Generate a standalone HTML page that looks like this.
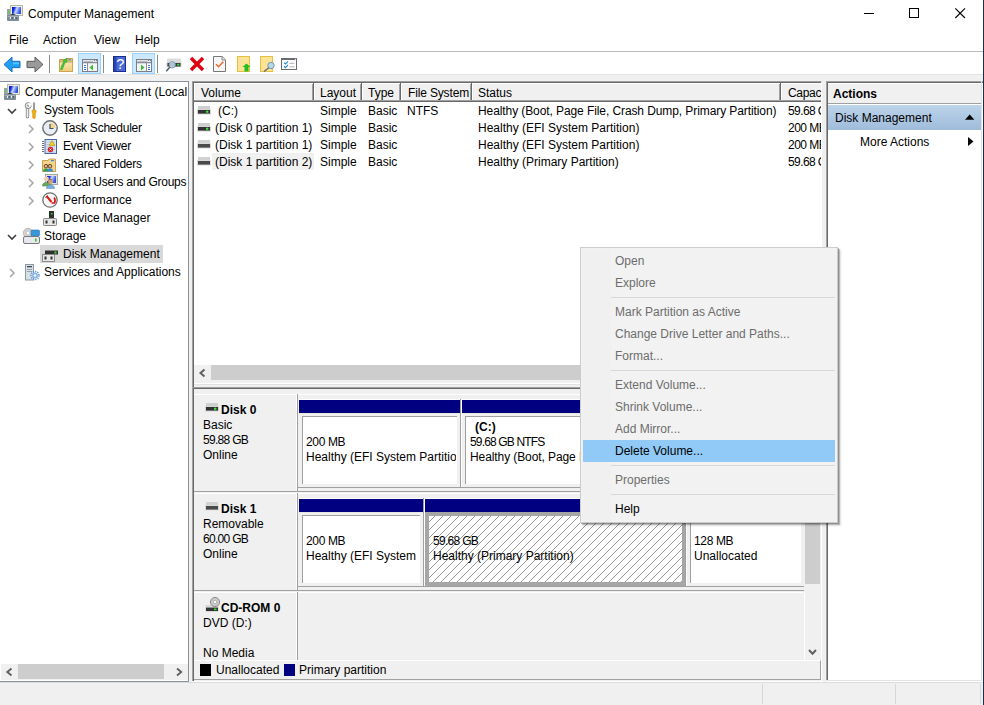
<!DOCTYPE html>
<html><head><meta charset="utf-8">
<style>
*{margin:0;padding:0;box-sizing:border-box}
html,body{width:984px;height:705px;overflow:hidden;background:#f0f0f0;font-family:"Liberation Sans",sans-serif;font-size:12px;color:#000}
.a{position:absolute}
.t{position:absolute;white-space:nowrap;line-height:14px;font-size:12px}
.b{font-weight:bold}
.g{color:#6d6d6d}
.clip{overflow:hidden}
svg{position:absolute;overflow:visible}
</style></head><body>
<!-- ===== title / menu / toolbar ===== -->
<div class="a" style="left:0;top:0;width:983px;height:74px;background:#fff"></div>
<div class="a" style="left:0;top:51px;width:983px;height:1px;background:#bababa"></div>
<div class="a" style="left:0;top:74px;width:983px;height:7px;background:#f0f0f0;border-top:1px solid #e2e2e2"></div>
<div class="a" style="left:983px;top:0;width:1px;height:705px;background:#1c2d4e"></div>
<div class="t" style="left:28px;top:7px">Computer Management</div>
<div class="t" style="left:9px;top:33px">File</div>
<div class="t" style="left:43px;top:33px">Action</div>
<div class="t" style="left:94px;top:33px">View</div>
<div class="t" style="left:135px;top:33px">Help</div>
<!-- window controls -->
<div class="a" style="left:864px;top:13px;width:10px;height:1px;background:#000"></div>
<div class="a" style="left:909px;top:8px;width:10px;height:10px;border:1px solid #000"></div>
<svg style="left:955px;top:8px" width="11" height="11"><path d="M0.3 0.3L10 10M10 0.3L0.3 10" stroke="#000" stroke-width="1.1"/></svg>

<!-- ===== left panel ===== -->
<div class="a" style="left:0;top:81px;width:189px;height:601px;background:#fff;border-top:1px solid #8c9299;border-right:1px solid #8c9299;border-bottom:1px solid #8c9299"></div>
<div class="a" style="left:40px;top:245px;width:123px;height:18px;background:#d9d9d9"></div>
<div class="a clip" style="left:0;top:82px;width:188px;height:582px">
<div class="t" style="left:25px;top:3px">Computer Management (Local</div>
<div class="t" style="left:44px;top:21px;letter-spacing:-0.1px">System Tools</div>
<div class="t" style="left:63px;top:39px;letter-spacing:-0.23px">Task Scheduler</div>
<div class="t" style="left:63px;top:57px;letter-spacing:-0.2px">Event Viewer</div>
<div class="t" style="left:63px;top:75px;letter-spacing:-0.23px">Shared Folders</div>
<div class="t" style="left:63px;top:93px;letter-spacing:-0.28px">Local Users and Groups</div>
<div class="t" style="left:63px;top:111px">Performance</div>
<div class="t" style="left:63px;top:129px">Device Manager</div>
<div class="t" style="left:44px;top:147px">Storage</div>
<div class="t" style="left:63px;top:165px">Disk Management</div>
<div class="t" style="left:44px;top:183px">Services and Applications</div>
</div>
<!-- left h-scrollbar -->
<div class="a" style="left:1px;top:664px;width:187px;height:16px;background:#f0f0f0"></div>
<div class="a" style="left:18px;top:664px;width:146px;height:15px;background:#cdcdcd"></div>

<!-- ===== middle panel ===== -->
<div class="a" style="left:192px;top:81px;width:630px;height:304px;border-top:1px solid #a0a0a0;border-left:1px solid #a0a0a0;border-right:1px solid #fff"></div>
<div class="a" style="left:193px;top:82px;width:628px;height:302px;border-top:1px solid #696969;border-left:1px solid #696969;background:#fff"></div>
<div class="a" style="left:192px;top:383px;width:630px;height:1px;background:#fff"></div>
<div class="a" style="left:192px;top:384px;width:630px;height:1px;background:#e3e3e3"></div>

<!-- list header -->
<div class="a" style="left:194px;top:83px;width:627px;height:19px;background:#f0f0f0"></div>
<div class="a" style="left:194px;top:83px;width:120px;height:1px;background:#fff"></div>
<div class="a" style="left:194px;top:83px;width:1px;height:18px;background:#fff"></div>
<div class="a" style="left:312px;top:84px;width:1px;height:17px;background:#a0a0a0"></div>
<div class="a" style="left:313px;top:83px;width:1px;height:19px;background:#696969"></div>
<div class="a" style="left:314px;top:83px;width:48px;height:1px;background:#fff"></div>
<div class="a" style="left:314px;top:83px;width:1px;height:18px;background:#fff"></div>
<div class="a" style="left:360px;top:84px;width:1px;height:17px;background:#a0a0a0"></div>
<div class="a" style="left:361px;top:83px;width:1px;height:19px;background:#696969"></div>
<div class="a" style="left:362px;top:83px;width:39px;height:1px;background:#fff"></div>
<div class="a" style="left:362px;top:83px;width:1px;height:18px;background:#fff"></div>
<div class="a" style="left:399px;top:84px;width:1px;height:17px;background:#a0a0a0"></div>
<div class="a" style="left:400px;top:83px;width:1px;height:19px;background:#696969"></div>
<div class="a" style="left:401px;top:83px;width:71px;height:1px;background:#fff"></div>
<div class="a" style="left:401px;top:83px;width:1px;height:18px;background:#fff"></div>
<div class="a" style="left:470px;top:84px;width:1px;height:17px;background:#a0a0a0"></div>
<div class="a" style="left:471px;top:83px;width:1px;height:19px;background:#696969"></div>
<div class="a" style="left:472px;top:83px;width:309px;height:1px;background:#fff"></div>
<div class="a" style="left:472px;top:83px;width:1px;height:18px;background:#fff"></div>
<div class="a" style="left:779px;top:84px;width:1px;height:17px;background:#a0a0a0"></div>
<div class="a" style="left:780px;top:83px;width:1px;height:19px;background:#696969"></div>
<div class="a" style="left:781px;top:83px;width:40px;height:1px;background:#fff"></div>
<div class="a" style="left:781px;top:83px;width:1px;height:18px;background:#fff"></div>
<div class="a" style="left:194px;top:100px;width:627px;height:1px;background:#a0a0a0"></div>
<div class="a" style="left:194px;top:101px;width:627px;height:1px;background:#696969"></div>

<div class="t" style="left:201px;top:86px">Volume</div>
<div class="t" style="left:320px;top:86px">Layout</div>
<div class="t" style="left:368px;top:86px">Type</div>
<div class="t" style="left:408px;top:86px;letter-spacing:-0.15px">File System</div>
<div class="t" style="left:478px;top:86px">Status</div>
<div class="a clip" style="left:783px;top:83px;width:38px;height:18px"><div class="t" style="left:5px;top:3px;letter-spacing:-0.3px">Capacity</div></div>
<!-- rows -->
<div class="a" style="left:212px;top:153px;width:102px;height:17px;background:#f0f0f0"></div>
<div class="t" style="left:218px;top:104px">(C:)</div>
<div class="t" style="left:215px;top:121px">(Disk 0 partition 1)</div>
<div class="t" style="left:215px;top:138px">(Disk 1 partition 1)</div>
<div class="t" style="left:215px;top:155px">(Disk 1 partition 2)</div>
<div class="t" style="left:320px;top:104px">Simple</div>
<div class="t" style="left:320px;top:121px">Simple</div>
<div class="t" style="left:320px;top:138px">Simple</div>
<div class="t" style="left:320px;top:155px">Simple</div>
<div class="t" style="left:368px;top:104px">Basic</div>
<div class="t" style="left:368px;top:121px">Basic</div>
<div class="t" style="left:368px;top:138px">Basic</div>
<div class="t" style="left:368px;top:155px">Basic</div>
<div class="t" style="left:407px;top:104px">NTFS</div>
<div class="t" style="left:478px;top:104px;letter-spacing:-0.09px">Healthy (Boot, Page File, Crash Dump, Primary Partition)</div>
<div class="t" style="left:478px;top:121px">Healthy (EFI System Partition)</div>
<div class="t" style="left:478px;top:138px">Healthy (EFI System Partition)</div>
<div class="t" style="left:478px;top:155px">Healthy (Primary Partition)</div>
<div class="a clip" style="left:783px;top:102px;width:38px;height:70px">
<div class="t" style="left:5px;top:2px;letter-spacing:-0.6px">59.68 GB</div>
<div class="t" style="left:5px;top:19px;letter-spacing:-0.5px">200 MB</div>
<div class="t" style="left:5px;top:36px;letter-spacing:-0.5px">200 MB</div>
<div class="t" style="left:5px;top:53px;letter-spacing:-0.6px">59.68 GB</div>
</div>
<!-- list h-scroll -->
<div class="a" style="left:194px;top:365px;width:627px;height:18px;background:#f0f0f0"></div>
<div class="a" style="left:211px;top:365px;width:580px;height:15px;background:#cdcdcd"></div>
<svg style="left:199px;top:369px" width="7" height="8"><path d="M5.5 0.5L1.5 4L5.5 7.5" stroke="#606060" stroke-width="2" fill="none"/></svg>

<!-- ===== disk graphic ===== -->
<div class="a" style="left:192px;top:81px;width:1px;height:601px;background:#a0a0a0"></div>
<div class="a" style="left:193px;top:82px;width:1px;height:599px;background:#696969"></div>
<div class="a" style="left:192px;top:387px;width:631px;height:1px;background:#a0a0a0"></div>
<div class="a" style="left:192px;top:388px;width:631px;height:1px;background:#696969"></div>
<div class="a" style="left:192px;top:387px;width:1px;height:295px;background:#a0a0a0"></div>
<div class="a" style="left:193px;top:388px;width:1px;height:293px;background:#696969"></div>
<div class="a" style="left:192px;top:681px;width:631px;height:1px;background:#fff"></div>
<div class="a" style="left:821px;top:387px;width:1px;height:295px;background:#fff"></div>
ROWS

<!-- disk rows -->
<div class="a" style="left:194px;top:394px;width:609px;height:1px;background:#fff"></div>
<div class="a" style="left:297px;top:394px;width:1px;height:97px;background:#a0a0a0"></div>
<div class="a" style="left:296px;top:395px;width:1px;height:96px;background:#fff"></div>
<div class="a" style="left:194px;top:491px;width:610px;height:1px;background:#a0a0a0"></div>
<div class="a" style="left:298px;top:487px;width:506px;height:1px;background:#a0a0a0"></div>
<div class="a" style="left:194px;top:493px;width:609px;height:1px;background:#fff"></div>
<div class="a" style="left:297px;top:493px;width:1px;height:97px;background:#a0a0a0"></div>
<div class="a" style="left:296px;top:494px;width:1px;height:96px;background:#fff"></div>
<div class="a" style="left:194px;top:590px;width:610px;height:1px;background:#a0a0a0"></div>
<div class="a" style="left:298px;top:586px;width:506px;height:1px;background:#a0a0a0"></div>
<div class="a" style="left:194px;top:592px;width:609px;height:1px;background:#fff"></div>
<div class="a" style="left:297px;top:592px;width:1px;height:68px;background:#a0a0a0"></div>
<div class="a" style="left:296px;top:593px;width:1px;height:67px;background:#fff"></div>

<div class="t b" style="left:221px;top:403px">Disk 0</div>
<div class="t" style="left:203px;top:418px">Basic</div>
<div class="t" style="left:203px;top:433px;letter-spacing:-0.7px">59.88 GB</div>
<div class="t" style="left:203px;top:448px">Online</div>
<div class="t b" style="left:221px;top:502px">Disk 1</div>
<div class="t" style="left:203px;top:517px">Removable</div>
<div class="t" style="left:203px;top:532px;letter-spacing:-0.7px">60.00 GB</div>
<div class="t" style="left:203px;top:547px">Online</div>
<div class="t b" style="left:221px;top:601px">CD-ROM 0</div>
<div class="t" style="left:203px;top:616px">DVD (D:)</div>
<div class="t" style="left:203px;top:646px">No Media</div>
<div class="a" style="left:299px;top:399px;width:161px;height:1px;background:#fff"></div>
<div class="a" style="left:299px;top:400px;width:161px;height:13px;background:#000080"></div>
<div class="a" style="left:460px;top:399px;width:1px;height:88px;background:#a0a0a0"></div>
<div class="a" style="left:461px;top:399px;width:1px;height:88px;background:#fff"></div>
<div class="a" style="left:299px;top:413px;width:161px;height:1px;background:#e6e6e0"></div>
<div class="a" style="left:302px;top:416px;width:155px;height:68px;background:#fff;border-top:1px solid #a0a0a0;border-left:1px solid #a0a0a0"></div>
<div class="a clip" style="left:302px;top:416px;width:154px;height:68px">
<div class="t" style="left:4px;top:19px;letter-spacing:-0.35px">200 MB</div>
<div class="t" style="left:4px;top:34px">Healthy (EFI System Partition)</div>
</div>
<div class="a" style="left:462px;top:399px;width:342px;height:1px;background:#fff"></div>
<div class="a" style="left:462px;top:400px;width:342px;height:13px;background:#000080"></div>
<div class="a" style="left:462px;top:413px;width:342px;height:1px;background:#e6e6e0"></div>
<div class="a" style="left:465px;top:416px;width:336px;height:68px;background:#fff;border-top:1px solid #a0a0a0;border-left:1px solid #a0a0a0"></div>
<div class="a clip" style="left:465px;top:416px;width:335px;height:68px">
<div class="t b" style="left:10px;top:4px">(C:)</div>
<div class="t" style="left:5px;top:19px;letter-spacing:-0.85px">59.68 GB NTFS</div>
<div class="t" style="left:5px;top:34px;letter-spacing:-0.09px">Healthy (Boot, Page File, Crash Dump, Primary Partition)</div>
</div>
<div class="a" style="left:299px;top:498px;width:124px;height:1px;background:#fff"></div>
<div class="a" style="left:299px;top:499px;width:124px;height:13px;background:#000080"></div>
<div class="a" style="left:423px;top:498px;width:1px;height:88px;background:#a0a0a0"></div>
<div class="a" style="left:424px;top:498px;width:1px;height:88px;background:#fff"></div>
<div class="a" style="left:299px;top:512px;width:124px;height:1px;background:#e6e6e0"></div>
<div class="a" style="left:302px;top:515px;width:118px;height:68px;background:#fff;border-top:1px solid #a0a0a0;border-left:1px solid #a0a0a0"></div>
<div class="a clip" style="left:302px;top:515px;width:117px;height:68px">
<div class="t" style="left:4px;top:19px;letter-spacing:-0.35px">200 MB</div>
<div class="t" style="left:4px;top:34px">Healthy (EFI System Partition)</div>
</div>
<div class="a" style="left:425px;top:498px;width:260px;height:1px;background:#fff"></div>
<div class="a" style="left:425px;top:499px;width:260px;height:13px;background:#000080"></div>
<div class="a" style="left:685px;top:498px;width:1px;height:88px;background:#a0a0a0"></div>
<div class="a" style="left:686px;top:498px;width:1px;height:88px;background:#fff"></div>
<div class="a" style="left:425px;top:512px;width:260px;height:74px;background:#a6a6a6"></div>
<svg style="left:429px;top:516px" width="253" height="66" shape-rendering="crispEdges"><defs><pattern id="h99" x="6" width="8" height="8" patternUnits="userSpaceOnUse"><rect x="0" y="7" width="1" height="1" fill="#969696"/><rect x="1" y="6" width="1" height="1" fill="#969696"/><rect x="2" y="5" width="1" height="1" fill="#969696"/><rect x="3" y="4" width="1" height="1" fill="#969696"/><rect x="4" y="3" width="1" height="1" fill="#969696"/><rect x="5" y="2" width="1" height="1" fill="#969696"/><rect x="6" y="1" width="1" height="1" fill="#969696"/><rect x="7" y="0" width="1" height="1" fill="#969696"/></pattern></defs><rect width="253" height="66" fill="#fff"/><rect width="253" height="66" fill="url(#h99)"/></svg>
<div class="a clip" style="left:429px;top:516px;width:252px;height:66px">
<div class="t" style="left:4px;top:18px;letter-spacing:-0.7px">59.68 GB</div>
<div class="t" style="left:4px;top:33px">Healthy (Primary Partition)</div>
</div>
<div class="a" style="left:687px;top:498px;width:117px;height:1px;background:#fff"></div>
<div class="a" style="left:687px;top:499px;width:117px;height:13px;background:#000"></div>
<div class="a" style="left:687px;top:512px;width:117px;height:1px;background:#e6e6e0"></div>
<div class="a" style="left:690px;top:515px;width:111px;height:68px;background:#fff;border-top:1px solid #a0a0a0;border-left:1px solid #a0a0a0"></div>
<div class="a clip" style="left:690px;top:515px;width:110px;height:68px">
<div class="t" style="left:4px;top:19px;letter-spacing:-0.35px">128 MB</div>
<div class="t" style="left:4px;top:34px">Unallocated</div>
</div>

<!-- disk v-scroll -->
<div class="a" style="left:804px;top:389px;width:17px;height:271px;background:#f0f0f0"></div>
<div class="a" style="left:805px;top:420px;width:15px;height:164px;background:#cdcdcd"></div>
<svg style="left:808px;top:649px" width="9" height="7"><path d="M1 1L4.5 4.8L8 1" stroke="#606060" stroke-width="2" fill="none"/></svg>
<div class="a" style="left:804px;top:592px;width:1px;height:68px;background:#fff"></div>
<!-- legend -->
<div class="a" style="left:194px;top:660px;width:627px;height:20px;background:#f0f0f0;border-top:1px solid #fff;border-right:1px solid #a0a0a0;border-bottom:1px solid #a0a0a0"></div>
<div class="a" style="left:200px;top:664px;width:11px;height:12px;background:#000"></div>
<div class="t" style="left:216px;top:663px">Unallocated</div>
<div class="a" style="left:284px;top:664px;width:11px;height:12px;background:#000080"></div>
<div class="t" style="left:299px;top:663px">Primary partition</div>

<!-- ===== actions panel ===== -->
<div class="a" style="left:826px;top:81px;width:157px;height:601px;background:#fff"></div>
<div class="a" style="left:826px;top:81px;width:157px;height:1px;background:#a0a0a0"></div>
<div class="a" style="left:826px;top:82px;width:157px;height:1px;background:#696969"></div>
<div class="a" style="left:826px;top:81px;width:1px;height:601px;background:#a0a0a0"></div>
<div class="a" style="left:827px;top:82px;width:1px;height:599px;background:#696969"></div>
<div class="a" style="left:828px;top:83px;width:153px;height:20px;background:#f0f0f0;border-top:1px solid #fff"></div>
<div class="a" style="left:828px;top:103px;width:153px;height:1px;background:#a0a0a0"></div>
<div class="a" style="left:828px;top:104px;width:153px;height:1px;background:#fff"></div>
<div class="a" style="left:828px;top:105px;width:153px;height:25px;background:linear-gradient(#bdd4ea,#9fbcdb)"></div>
<div class="a" style="left:981px;top:81px;width:1px;height:601px;background:#e3e3e3"></div>
<div class="a" style="left:826px;top:681px;width:157px;height:1px;background:#fff"></div>
<div class="a" style="left:826px;top:680px;width:156px;height:1px;background:#e3e3e3"></div>
<div class="t b" style="left:833px;top:87px">Actions</div>
<div class="t" style="left:835px;top:111px">Disk Management</div>
<div class="t" style="left:860px;top:135px">More Actions</div>
<svg style="left:965px;top:114px" width="10" height="6"><path d="M0 5.8L4.7 0.6L9.4 5.8Z" fill="#000"/></svg>
<svg style="left:968px;top:137px" width="6" height="9"><path d="M0 0L5.5 4.5L0 9Z" fill="#000"/></svg>

<!-- status bar -->
<div class="a" style="left:0;top:682px;width:983px;height:1px;background:#dcdcdc"></div>
<div class="a" style="left:762px;top:684px;width:1px;height:20px;background:#d7d7d7"></div>
<div class="a" style="left:895px;top:684px;width:1px;height:20px;background:#d7d7d7"></div>
<div class="a" style="left:980px;top:684px;width:1px;height:20px;background:#d7d7d7"></div>


<!-- ===== icons ===== -->
<svg width="0" height="0" style="left:0;top:0"><defs>
<linearGradient id="scr" x1="0" y1="0" x2="1" y2="0.3"><stop offset="0" stop-color="#0010c0"/><stop offset="0.3" stop-color="#1838d8"/><stop offset="0.55" stop-color="#c8d8ff"/><stop offset="1" stop-color="#3050e0"/></linearGradient>
<g id="comp">
<rect x="3.5" y="0.5" width="12" height="10" fill="#eeeee4" stroke="#b8b8a8"/>
<rect x="5" y="2" width="9" height="7" fill="url(#scr)"/>
<rect x="0" y="4" width="3" height="7" fill="#9aa2a6"/>
<rect x="0.8" y="6.5" width="2" height="1.5" fill="#40e040"/>
<path d="M3 11C4 9 8 9 9 11" stroke="#202020" stroke-width="1.2" fill="none"/>
<rect x="0" y="10" width="12" height="6" rx="0.8" fill="#7e8e98"/>
<rect x="0.5" y="11" width="11" height="1" fill="#a8b4bc"/>
<rect x="3" y="12" width="1.5" height="2" fill="#e8eef2"/><rect x="7" y="12" width="1.5" height="2" fill="#e8eef2"/>
<rect x="4.5" y="12" width="1" height="2" fill="#303840"/><rect x="8.5" y="12" width="1" height="2" fill="#303840"/>
</g>
<g id="drv">
<rect x="1" y="0" width="12" height="3.5" fill="#cfcfcf"/>
<rect x="0" y="3" width="14" height="5.5" rx="0.5" fill="#d6d6d6"/>
<rect x="1" y="4" width="12" height="3.6" fill="#333"/>
</g>
<g id="drvg">
<use href="#drv"/>
<rect x="9" y="5" width="2.4" height="1.6" fill="#30e030"/><rect x="9.7" y="4.3" width="1" height="3" fill="#50f050" opacity="0.7"/>
</g>
<g id="drvn">
<rect x="1" y="0" width="12" height="3.5" fill="#d2d2d2"/>
<rect x="0" y="3" width="14" height="5.5" rx="0.5" fill="#dadada"/>
<rect x="1" y="4" width="12" height="3.6" fill="#4a4a4a"/>
</g>
</defs></svg>

<!-- title icon -->
<svg style="left:7px;top:5px" width="16" height="16"><use href="#comp"/></svg>

<!-- toolbar -->
<svg style="left:3px;top:56px" width="18" height="17"><path d="M1 8.5L9 1V5.3H17V11.6H9V16Z" fill="#22a0f0" stroke="#1a6cc8" stroke-width="1" stroke-linejoin="round"/><rect x="10" y="6.3" width="6" height="2" fill="#58c0ff"/></svg>
<svg style="left:26px;top:56px" width="18" height="17"><path d="M17 8.5L9 1V5.3H1V11.6H9V16Z" fill="#9a9a9a" stroke="#5a5a5a" stroke-width="1" stroke-linejoin="round"/></svg>
<div class="a" style="left:49px;top:55px;width:1px;height:18px;background:#8a8a8a"></div>
<div class="a" style="left:103px;top:55px;width:1px;height:18px;background:#8a8a8a"></div>
<div class="a" style="left:157px;top:55px;width:1px;height:18px;background:#8a8a8a"></div>
<svg style="left:59px;top:57px" width="15" height="16"><defs><linearGradient id="fd" x1="0" y1="0" x2="0" y2="1"><stop offset="0" stop-color="#fbe6b0"/><stop offset="1" stop-color="#f0cc78"/></linearGradient></defs><path d="M0.5 2.5H6L7 1.5H13.5V14.5H0.5Z" fill="#e8c070" stroke="#c8a050"/><rect x="0.5" y="5" width="13" height="9.5" fill="url(#fd)" stroke="#c8a050" stroke-width="0.8"/><rect x="9.5" y="2.2" width="2.5" height="1.3" fill="#4a90e0"/><path d="M1.5 12.5C2.5 9 3.5 6.5 5 4.5L3.8 3.6L8.2 1L7.8 5.6L6.6 4.9C5.3 7 4.3 9.5 3.3 12.8Z" fill="#3cc83c" stroke="#2aa02a" stroke-width="0.5"/></svg>
<div class="a" style="left:78px;top:53px;width:23px;height:21px;background:#cce8ff;border:1px solid #99d1ff"></div>
<svg style="left:82px;top:59px" width="16" height="13" shape-rendering="crispEdges"><rect x="0" y="0" width="16" height="13" fill="#7a7e86"/><rect x="1" y="1" width="14" height="11" fill="#fff"/><rect x="1" y="1" width="14" height="2" fill="#e4e6ea"/><rect x="2" y="1.5" width="9" height="1" fill="#b8bcc2"/><rect x="12" y="1" width="1" height="1" fill="#7a7e86"/><rect x="14" y="1" width="1" height="1" fill="#7a7e86"/><rect x="1" y="3" width="14" height="1" fill="#8a8e96"/><rect x="1" y="4" width="14" height="1" fill="#d8dade"/><rect x="5" y="4" width="1" height="8" fill="#8a8e96"/><rect x="6" y="5" width="9" height="7" fill="#f4f4f4"/><rect x="2" y="6" width="2" height="1" fill="#3a78c8"/><rect x="2" y="8" width="2" height="1" fill="#3a78c8"/><rect x="2" y="10" width="2" height="1" fill="#3a78c8"/><path d="M11 5.5V11.5L7.5 8.5Z" fill="#3cba3c" shape-rendering="auto"/></svg>
<svg style="left:113px;top:56px" width="13" height="16"><rect x="0.5" y="0.5" width="12" height="15" fill="#4a6ad8" stroke="#1c2f88"/><rect x="1" y="1" width="2.5" height="14" fill="#2a44b0"/><text x="7.3" y="13.2" font-family="Liberation Sans" font-size="14.5" fill="#fff" text-anchor="middle">?</text></svg>
<div class="a" style="left:132px;top:53px;width:23px;height:21px;background:#cce8ff;border:1px solid #99d1ff"></div>
<svg style="left:136px;top:59px" width="16" height="13" shape-rendering="crispEdges"><rect x="0" y="0" width="16" height="13" fill="#7a7e86"/><rect x="1" y="1" width="14" height="11" fill="#fff"/><rect x="1" y="1" width="14" height="2" fill="#e4e6ea"/><rect x="2" y="1.5" width="9" height="1" fill="#b8bcc2"/><rect x="12" y="1" width="1" height="1" fill="#7a7e86"/><rect x="14" y="1" width="1" height="1" fill="#7a7e86"/><rect x="1" y="3" width="14" height="1" fill="#8a8e96"/><rect x="1" y="4" width="14" height="1" fill="#d8dade"/><rect x="10" y="4" width="1" height="8" fill="#8a8e96"/><rect x="1" y="5" width="9" height="7" fill="#f4f4f4"/><rect x="12" y="6" width="2" height="1" fill="#3a78c8"/><rect x="12" y="8" width="2" height="1" fill="#3a78c8"/><rect x="12" y="10" width="2" height="1" fill="#3a78c8"/><path d="M5 5.5V11.5L8.5 8.5Z" fill="#3cba3c" shape-rendering="auto"/></svg>
<svg style="left:165px;top:58px" width="17" height="15"><rect x="2" y="0.5" width="14" height="5" rx="1" fill="#dcdcdc"/><rect x="1.5" y="4.5" width="15" height="4.5" fill="#cfcfcf"/><rect x="2.5" y="5" width="13" height="3.5" fill="#383838"/><rect x="12.2" y="5.8" width="2" height="1.8" fill="#30e030"/><circle cx="7.2" cy="6.8" r="3.2" fill="#b8d4e8" fill-opacity="0.9" stroke="#7890a0" stroke-width="0.9"/><path d="M5 9L1.2 13.2" stroke="#506070" stroke-width="1.5"/></svg>
<svg style="left:189px;top:56px" width="16" height="16"><path d="M2 2L14 14M14 2L2 14" stroke="#e00010" stroke-width="3.4"/></svg>
<svg style="left:213px;top:56px" width="14" height="16"><path d="M0.5 0.5H9.2L12.5 3.8V15.5H0.5Z" fill="#f6f6f6" stroke="#787878" stroke-width="1"/><path d="M9 0.5V4H12.5" fill="#e0e0e0" stroke="#787878" stroke-width="0.8"/><path d="M3 8.2L5.5 10.7L10.3 5.7" stroke="#f06a28" stroke-width="1.5" fill="none"/></svg>
<svg style="left:237px;top:56px" width="14" height="16"><rect x="0.5" y="0.5" width="12" height="15" fill="#fde398" stroke="#e8c040"/><path d="M9.5 7.5L13.5 11H11.5V15.5H7.5V11H5.5Z" fill="#20c020"/></svg>
<svg style="left:260px;top:56px" width="15" height="16"><rect x="0.5" y="0.5" width="12" height="15" fill="#fde398" stroke="#e8c040"/><circle cx="11" cy="9.5" r="3.2" fill="#b8d8e8" stroke="#7898a8"/><path d="M8.8 11.8L4 15.5" stroke="#5a6a78" stroke-width="1.4"/></svg>
<svg style="left:281px;top:58px" width="16" height="12"><rect x="0.5" y="0.5" width="15" height="11" fill="#fff" stroke="#6a6e72" stroke-width="1"/><rect x="0.5" y="0.5" width="15" height="1.5" fill="#6a6e72"/><rect x="14" y="0.8" width="1" height="1" fill="#fff"/><path d="M3 4.6L4.5 6L7 3.3M3 8.2L4.5 9.6L7 6.9" stroke="#2a88e0" stroke-width="1.2" fill="none"/><rect x="8.5" y="4.8" width="5" height="1" fill="#b0b0b0"/><rect x="8.5" y="8.3" width="5" height="1" fill="#b0b0b0"/></svg>

<!-- tree icons & chevrons -->
<svg style="left:4px;top:84px" width="16" height="16"><use href="#comp"/></svg>
<svg style="left:7px;top:108px" width="10" height="7"><path d="M1 1L5 5L9 1" stroke="#404040" stroke-width="1.6" fill="none"/></svg>
<svg style="left:7px;top:234px" width="10" height="7"><path d="M1 1L5 5L9 1" stroke="#404040" stroke-width="1.6" fill="none"/></svg>
<svg style="left:25px;top:102px" width="12" height="17"><path d="M2.5 6.5V14.8" stroke="#8a8a8a" stroke-width="3.4" stroke-linecap="round"/><path d="M2.5 6.5V14.8" stroke="#f2f2f2" stroke-width="1.6" stroke-linecap="round"/><circle cx="3.2" cy="3.6" r="3" fill="#ececec" stroke="#8a8a8a" stroke-width="1"/><path d="M3.6 1.2L6.8 2.2L5 4.6Z" fill="#fff" stroke="#fff" stroke-width="0.8"/><rect x="2" y="3" width="2" height="1.5" fill="#9a9a9a" transform="rotate(35 3 3.7)"/><rect x="8.4" y="0.5" width="1.2" height="7.5" fill="#5a5a5a"/><path d="M7 8.2H11V10.2L10.3 11V15.2C10.3 16 9.8 16.5 9 16.5S7.7 16 7.7 15.2V11L7 10.2Z" fill="#f2b010" stroke="#c88a00" stroke-width="0.6"/></svg>
<svg style="left:28px;top:124px" width="7" height="10"><path d="M1 1L5 5L1 9" stroke="#a6a6a6" stroke-width="1.5" fill="none"/></svg>
<svg style="left:28px;top:142px" width="7" height="10"><path d="M1 1L5 5L1 9" stroke="#a6a6a6" stroke-width="1.5" fill="none"/></svg>
<svg style="left:28px;top:160px" width="7" height="10"><path d="M1 1L5 5L1 9" stroke="#a6a6a6" stroke-width="1.5" fill="none"/></svg>
<svg style="left:28px;top:178px" width="7" height="10"><path d="M1 1L5 5L1 9" stroke="#a6a6a6" stroke-width="1.5" fill="none"/></svg>
<svg style="left:28px;top:196px" width="7" height="10"><path d="M1 1L5 5L1 9" stroke="#a6a6a6" stroke-width="1.5" fill="none"/></svg>
<svg style="left:9px;top:268px" width="7" height="10"><path d="M1 1L5 5L1 9" stroke="#a6a6a6" stroke-width="1.5" fill="none"/></svg>

<svg style="left:42px;top:120px" width="16" height="16"><circle cx="8" cy="8" r="7.2" fill="#e8eef4" stroke="#707070" stroke-width="1.4"/><path d="M8 2.5A5.5 5.5 0 0 1 13.5 8H8Z" fill="#f2d48c"/><path d="M8 4V8.5H11.5" stroke="#405068" stroke-width="1.2" fill="none"/></svg>
<svg style="left:43px;top:139px" width="14" height="15"><rect x="2" y="0.5" width="11.5" height="14" fill="#dce6f4" stroke="#4a64a8"/><path d="M3 3H12M3 5.5H12M3 8H12M3 10.5H12M3 13H12" stroke="#a8bcdc" stroke-width="0.8"/><path d="M0 2V13" stroke="#707070" stroke-width="2" stroke-dasharray="1 1"/><path d="M9 1.5L12 6.5H6Z" fill="#f0d020" stroke="#b09010" stroke-width="0.6"/><circle cx="7.5" cy="10.5" r="2.7" fill="#d82020"/><path d="M6.5 9.5L8.5 11.5M8.5 9.5L6.5 11.5" stroke="#fff" stroke-width="0.8"/></svg>
<svg style="left:42px;top:158px" width="14" height="14"><path d="M0.5 2.5H6L7 1H13.5V13.5H0.5Z" fill="#f2d48c" stroke="#c8a050"/><rect x="9" y="2" width="3" height="1.2" fill="#3a88e0"/><circle cx="4" cy="8.2" r="1.8" fill="#e8b888" stroke="#402818" stroke-width="0.8"/><circle cx="8" cy="8.2" r="1.8" fill="#e8b888" stroke="#402818" stroke-width="0.8"/><path d="M1 13.5C1 11 2.5 10.5 4 10.5C5.5 10.5 7 11 7 13.5Z" fill="#30a050"/><path d="M5 13.5C5 11 6.5 10.5 8 10.5C9.5 10.5 11 11 11 13.5Z" fill="#3a8ad0"/></svg>
<svg style="left:42px;top:174px" width="16" height="17"><rect x="3.5" y="0.5" width="12" height="10" fill="#e0e4dc" stroke="#a8a8a0"/><rect x="5" y="2" width="9" height="7" fill="url(#scr)"/><path d="M0.5 12C0.5 9.5 2 8.5 4.5 8.5C7 8.5 8.5 9.5 8.5 12Z" fill="#68a858" stroke="#4a8a40" stroke-width="0.6"/><circle cx="4.5" cy="5" r="2.4" fill="#f0d0a8"/><path d="M2.1 4.6C2.1 2.5 6.9 2.5 6.9 4.6L6.5 3.3L2.5 3.3Z" fill="#d8c080"/><path d="M4.5 14.5C4.5 12 6 11 8.5 11C11 11 12.5 12 12.5 14.5Z" fill="#7aaee0" stroke="#5a8ec0" stroke-width="0.6"/><circle cx="8.5" cy="7.6" r="2.4" fill="#d8a070"/><path d="M6.1 7.2C6.1 5 10.9 5 10.9 7.2L10.5 5.9L6.5 5.9Z" fill="#503018"/></svg>
<svg style="left:42px;top:192px" width="16" height="16"><circle cx="8" cy="8" r="7.2" fill="#f8f8f8" stroke="#707070" stroke-width="1.3"/><path d="M3.5 6A5 5 0 0 1 6 3.5" stroke="#4a9a7a" stroke-width="1.2" fill="none"/><path d="M4.5 4L9.5 10" stroke="#e01818" stroke-width="2"/><path d="M12 5.5A5 5 0 0 1 12.5 11H9.5" stroke="#e01818" stroke-width="1.6" fill="none"/></svg>
<svg style="left:43px;top:210px" width="14" height="16"><rect x="6" y="1" width="5" height="8" fill="#303030"/><rect x="8" y="3" width="1.5" height="1.5" fill="#30e030"/><rect x="0.5" y="8.5" width="13" height="7" rx="0.8" fill="#e6e6e6" stroke="#8a8a8a"/><rect x="2.5" y="10.5" width="2" height="3" fill="#303030"/><rect x="9.5" y="10.5" width="2" height="3" fill="#303030"/></svg>
<svg style="left:23px;top:228px" width="17" height="16"><circle cx="5" cy="5" r="4.7" fill="#d0d0d0" stroke="#a0a0a0" stroke-width="0.6"/><circle cx="5" cy="5" r="1.2" fill="#fff"/><rect x="8" y="2" width="8.5" height="6" rx="1" fill="#3a98d8" stroke="#2a78b8" stroke-width="0.6"/><rect x="0.5" y="8.5" width="16" height="7" rx="1.5" fill="#e8e8ee" stroke="#7a7a7a"/><rect x="12" y="10.5" width="1.6" height="3" fill="#30c030"/></svg>
<svg style="left:42px;top:247px" width="16" height="15"><rect x="3" y="0.5" width="12" height="3.5" rx="0.8" fill="#d8d8d8"/><rect x="3" y="3.5" width="13" height="4" fill="#303030"/><rect x="12.5" y="4.5" width="2" height="2" fill="#30e030"/><rect x="0.5" y="7.5" width="12" height="7" fill="#e6e6e6" stroke="#8a8a8a"/><rect x="2.5" y="9.5" width="2" height="3" fill="#303030"/><rect x="8.5" y="9.5" width="2" height="3" fill="#303030"/></svg>
<svg style="left:25px;top:264px" width="15" height="17"><rect x="0.5" y="0.5" width="8" height="15.5" fill="#d8e0e4" stroke="#8a9aa4"/><rect x="2" y="2" width="5" height="1.3" fill="#404850"/><rect x="2" y="5" width="5" height="0.8" fill="#8090a0"/><rect x="2" y="7" width="5" height="0.8" fill="#8090a0"/><g transform="translate(10 11.5)"><circle r="4" fill="none" stroke="#6a9ad8" stroke-width="1.6" stroke-dasharray="1.3 1"/><circle r="2.9" fill="#8ab4e4"/><circle r="1.2" fill="#fff"/></g></svg>
<svg style="left:197px;top:106px" width="14" height="8"><use href="#drvg"/></svg>
<svg style="left:197px;top:123px" width="14" height="8"><use href="#drvg"/></svg>
<svg style="left:197px;top:140px" width="14" height="8"><use href="#drvn"/></svg>
<svg style="left:197px;top:157px" width="14" height="8"><use href="#drvn"/></svg>
<svg style="left:205px;top:403px" width="14" height="8"><use href="#drvg"/></svg>
<svg style="left:205px;top:502px" width="14" height="8"><use href="#drvn"/></svg>
<svg style="left:205px;top:597px" width="16" height="16"><rect x="0.5" y="8" width="13" height="7" fill="#d8d8d8"/><circle cx="10" cy="5" r="4.6" fill="#cacaca" stroke="#8c8c8c" stroke-width="1"/><circle cx="10" cy="5" r="1.7" fill="#fafafa" stroke="#9a9a9a" stroke-width="0.6"/><rect x="1" y="10.6" width="12" height="3.4" fill="#333"/><rect x="9" y="11.5" width="2.4" height="1.6" fill="#30e030"/></svg>
<svg style="left:6px;top:668px" width="7" height="8"><path d="M5.5 0.5L1.3 4L5.5 7.5" stroke="#606060" stroke-width="1.9" fill="none"/></svg>
<svg style="left:176px;top:668px" width="7" height="8"><path d="M1 0.5L5.2 4L1 7.5" stroke="#606060" stroke-width="1.9" fill="none"/></svg>

<!-- ===== context menu ===== -->
<div class="a" style="left:580px;top:247px;width:258px;height:276px;background:#f2f2f2;border:1px solid #cccccc;box-shadow:1px 1px 0 rgba(0,0,0,0.22),2px 2px 1px rgba(0,0,0,0.2),3px 3px 2px rgba(0,0,0,0.1)"></div>
<div class="a" style="left:582px;top:249px;width:29px;height:272px;background:#f0f0f0"></div>
<div class="a" style="left:611px;top:297px;width:224px;height:1px;background:#d7d7d7"></div>
<div class="a" style="left:611px;top:370px;width:224px;height:1px;background:#d7d7d7"></div>
<div class="a" style="left:611px;top:465px;width:224px;height:1px;background:#d7d7d7"></div>
<div class="a" style="left:611px;top:494px;width:224px;height:1px;background:#d7d7d7"></div>
<div class="a" style="left:583px;top:440px;width:252px;height:22px;background:#91c9f7"></div>
<div class="t g" style="left:615px;top:254px">Open</div>
<div class="t g" style="left:615px;top:276px">Explore</div>
<div class="t g" style="left:615px;top:305px">Mark Partition as Active</div>
<div class="t g" style="left:615px;top:327px">Change Drive Letter and Paths...</div>
<div class="t g" style="left:615px;top:349px">Format...</div>
<div class="t g" style="left:615px;top:378px">Extend Volume...</div>
<div class="t g" style="left:615px;top:400px">Shrink Volume...</div>
<div class="t g" style="left:615px;top:422px">Add Mirror...</div>
<div class="t" style="left:615px;top:444px">Delete Volume...</div>
<div class="t g" style="left:615px;top:473px">Properties</div>
<div class="t" style="left:615px;top:502px">Help</div>
</body></html>
